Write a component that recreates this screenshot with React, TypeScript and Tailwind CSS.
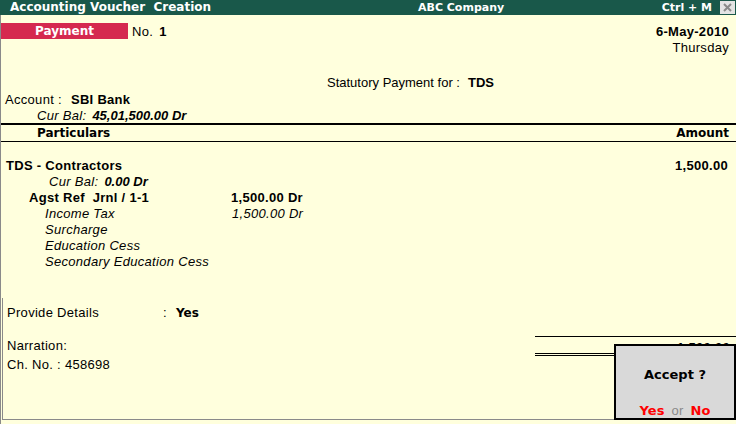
import React from "react";

const A = "font-['Liberation_Sans',Arial,sans-serif]";
const V = "font-['DejaVu_Sans',Verdana,sans-serif] font-bold tracking-normal";
const BI = "font-bold italic tracking-normal";

export default function App() {
  return (
    <div className={`relative flex h-[424px] w-[736px] flex-col overflow-hidden bg-[#FFFFDD] text-[13px] leading-[18px] tracking-[0.3px] text-black ${A}`}>
      {/* Title bar */}
      <div className="flex h-[15px] shrink-0 items-center bg-[#19584A] text-white">
        <span className={`w-[418px] whitespace-pre pl-[10px] text-[12px] leading-[15px] ${V} tracking-[-0.3px]`}>Accounting Voucher  Creation</span>
        <span className={`text-[11px] leading-[15px] ${V} tracking-[0.3px]`}>ABC Company</span>
        <span className="flex-1" />
        <span className={`text-[11px] leading-[15px] ${V} tracking-[0.2px]`}>Ctrl + M</span>
        <span className="ml-[8px] mr-[1px] flex h-[13px] w-[15px] items-center justify-center bg-[#E4E4E4]">
          <svg width="9" height="9" viewBox="0 0 9 9">
            <path d="M1 1 L8 8 M8 1 L1 8" stroke="#8A8A8A" strokeWidth="2" />
          </svg>
        </span>
      </div>

      {/* Body */}
      <div className="flex flex-1 flex-col border-l border-[#8A8A8A]">
        <div className="mt-[8px] flex h-[16px]">
          <div className={`flex h-[16px] w-[127px] items-center justify-center bg-[#D5294F] text-[12px] leading-[16px] text-white ${V}`}>Payment</div>
          <span className="ml-[4px]">No.</span>
          <span className="ml-[6px] font-bold">1</span>
          <span className="flex-1" />
          <span className="pr-[7px] font-bold">6-May-2010</span>
        </div>
        <div className="flex h-[16px] justify-end pr-[7px]">Thursday</div>

        <div className="mt-[19px] flex h-[16px] pl-[326px] tracking-normal">
          <span>Statutory Payment for :</span>
          <span className="ml-[8px] font-bold">TDS</span>
        </div>
        <div className="mt-[1px] flex h-[16px] pl-[4px]">
          <span>Account :</span>
          <span className="ml-[9px] font-bold">SBI Bank</span>
        </div>
        <div className="flex h-[16px] pl-[36px]">
          <span className="italic">Cur Bal:</span>
          <span className={`ml-[6px] ${BI}`}>45,01,500.00 Dr</span>
        </div>

        <div className="h-[2px] bg-black" />
        <div className="flex h-[16px] items-center justify-between pl-[36px] pr-[7px]">
          <span className={`text-[12px] leading-[16px] ${V}`}>Particulars</span>
          <span className={`text-[12px] leading-[16px] ${V}`}>Amount</span>
        </div>
        <div className="h-px bg-black" />

        <div className="mt-[15px] flex h-[16px] justify-between pl-[5px] pr-[8px] font-bold">
          <span>TDS - Contractors</span>
          <span>1,500.00</span>
        </div>
        <div className="flex h-[16px] pl-[48px]">
          <span className="italic">Cur Bal:</span>
          <span className={`ml-[6px] ${BI}`}>0.00 Dr</span>
        </div>
        <div className="flex h-[16px] font-bold">
          <span className="w-[230px] whitespace-pre pl-[28px]">Agst Ref  Jrnl / 1-1</span>
          <span>1,500.00 Dr</span>
        </div>
        <div className="flex h-[16px] italic">
          <span className="w-[231px] pl-[44px]">Income Tax</span>
          <span>1,500.00 Dr</span>
        </div>
        <div className="h-[16px] pl-[44px] italic">Surcharge</div>
        <div className="h-[16px] pl-[44px] italic">Education Cess</div>
        <div className="h-[16px] pl-[44px] italic">Secondary Education Cess</div>

        {/* Bottom box */}
        <div className="ml-[1px] mt-[29px] flex h-[122px] border-b border-l border-[#8A8A8A]">
          <div className="flex flex-1 flex-col pl-[4px] pt-[6px]">
            <div className="flex h-[16px]">
              <span className="w-[156px]">Provide Details</span>
              <span>:</span>
              <span className={`ml-[9px] text-[12px] ${V}`}>Yes</span>
            </div>
            <div className="mt-[17px] h-[16px]">Narration:</div>
            <div className="mt-[3px] h-[16px]">Ch. No. : 458698</div>
          </div>
          <div className="mt-[38px] flex h-[20px] w-[201px] flex-col border-t border-black">
            <div className="flex h-[16px] justify-end pr-[6px] pt-[2px] font-bold">1,500.00</div>
            <div className="h-[3px] border-b-[3px] border-double border-black" />
          </div>
        </div>
      </div>

      {/* Accept dialog */}
      <div className="absolute left-[614px] top-[344px] flex h-[76px] w-[122px] flex-col items-center border-2 border-black bg-[#D9D9D9] pt-[21px]">
        <div className={`h-[16px] text-[13px] leading-[16px] ${V}`}>Accept ?</div>
        <div className="mt-[20px] flex h-[16px] items-center">
          <span className={`text-[13px] leading-[16px] text-[#FF0000] ${V}`}>Yes</span>
          <span className="mx-[7px] text-[13px] leading-[16px] text-[#8A8A8A]">or</span>
          <span className={`text-[13px] leading-[16px] text-[#FF0000] ${V}`}>No</span>
        </div>
      </div>
    </div>
  );
}
